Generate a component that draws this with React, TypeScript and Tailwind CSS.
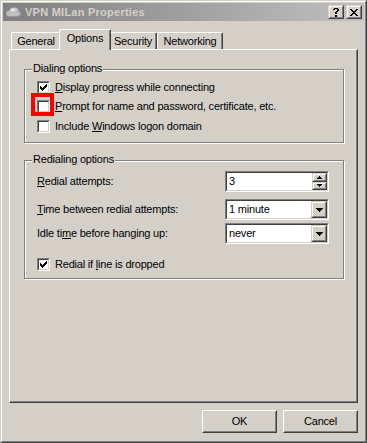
import React from "react";

function Pix({ rows, color = "#000" }: { rows: string[]; color?: string }) {
  const w = rows[0].length;
  const h = rows.length;
  let d = "";
  rows.forEach((r, y) => {
    for (let x = 0; x < r.length; x++) if (r[x] === "x") d += `M${x} ${y}h1v1h-1z`;
  });
  return (
    <svg width={w} height={h} viewBox={`0 0 ${w} ${h}`} shapeRendering="crispEdges" className="block">
      <path d={d} fill={color} />
    </svg>
  );
}

const CHECK = ["......x", ".....xx", "x...xxx", "xx.xxx.", "xxxxx..", ".xxx...", "..x...."];
const DOWN = ["xxxxxxx", ".xxxxx.", "..xxx..", "...x..."];
const SUP = ["..x..", ".xxx.", "xxxxx"];
const SDOWN = ["xxxxx", ".xxx.", "..x.."];
const CLOSE = ["xx....xx", ".xx..xx.", "..xxxx..", "...xx...", "..xxxx..", ".xx..xx.", "xx....xx"];
const HELP = [".xxxx.", "xx..xx", "....xx", "...xx.", "..xx..", "..xx..", "......", "..xx..", "..xx.."];

function Check({ checked }: { checked?: boolean }) {
  return (
    <div className="w-[13px] h-[13px] shrink-0 border border-t-[#808080] border-l-[#808080] border-b-white border-r-white">
      <div className="w-full h-full border border-t-[#404040] border-l-[#404040] border-b-[#d4d0c8] border-r-[#d4d0c8] bg-white flex items-center justify-center">
        {checked && <Pix rows={CHECK} />}
      </div>
    </div>
  );
}

function CapBtn({ children }: { children: React.ReactNode }) {
  return (
    <div className="w-[16px] h-[14px] border border-t-[#d4d0c8] border-l-[#d4d0c8] border-b-[#404040] border-r-[#404040]">
      <div className="w-full h-full bg-[#d4d0c8] border border-t-white border-l-white border-b-[#808080] border-r-[#808080] flex items-center justify-center">
        {children}
      </div>
    </div>
  );
}

function Sunken({ children }: { children: React.ReactNode }) {
  return (
    <div className="w-[104px] h-[21px] border border-t-[#808080] border-l-[#808080] border-b-white border-r-white">
      <div className="w-full h-full bg-white border border-t-[#404040] border-l-[#404040] border-b-[#d4d0c8] border-r-[#d4d0c8] flex">
        {children}
      </div>
    </div>
  );
}

function Combo({ value }: { value: string }) {
  return (
    <Sunken>
      <div className="flex-1 pl-[2px] flex items-center leading-[13px]">{value}</div>
      <div className="w-[16px] h-full border border-t-[#d4d0c8] border-l-[#d4d0c8] border-b-[#404040] border-r-[#404040]">
        <div className="w-full h-full bg-[#d4d0c8] border border-t-white border-l-white border-b-[#808080] border-r-[#808080] flex items-center justify-center">
          <Pix rows={DOWN} />
        </div>
      </div>
    </Sunken>
  );
}

function Spin({ value }: { value: string }) {
  return (
    <Sunken>
      <div className="flex-1 pl-[2px] flex items-center leading-[13px]">{value}</div>
      <div className="w-[15px] h-full flex flex-col">
        {[SUP, SDOWN].map((r, i) => (
          <div key={i} className="flex-1 border border-t-[#d4d0c8] border-l-[#d4d0c8] border-b-[#404040] border-r-[#404040]">
            <div className="w-full h-full bg-[#d4d0c8] border border-t-white border-l-white border-b-[#808080] border-r-[#808080] flex items-center justify-center">
              <Pix rows={r} />
            </div>
          </div>
        ))}
      </div>
    </Sunken>
  );
}

function PushBtn({ label }: { label: string }) {
  return (
    <div className="w-[75px] h-[23px] border border-t-white border-l-white border-b-[#404040] border-r-[#404040]">
      <div className="w-full h-full bg-[#d4d0c8] border border-t-[#d4d0c8] border-l-[#d4d0c8] border-b-[#808080] border-r-[#808080] flex items-center justify-center leading-[13px]">
        {label}
      </div>
    </div>
  );
}

function Tab({ label, w, selected }: { label: string; w: string; selected?: boolean }) {
  if (selected) {
    return (
      <div
        className={`${w} h-[21px] -mb-[1px] -mx-[2px] relative z-10 bg-[#d4d0c8] border-l border-t border-r border-l-white border-t-white border-r-[#404040] rounded-tl-[2px] rounded-tr-[2px] shadow-[inset_-1px_0_0_#808080] flex justify-center pt-[2px] leading-[13px]`}
      >
        {label}
      </div>
    );
  }
  return (
    <div
      className={`${w} h-[17px] bg-[#d4d0c8] border-l border-t border-r border-l-white border-t-white border-r-[#404040] rounded-tl-[2px] rounded-tr-[2px] shadow-[inset_-1px_0_0_#808080] flex justify-center pt-[2px] leading-[13px]`}
    >
      {label}
    </div>
  );
}

function CheckRow({ checked, children, mark }: { checked?: boolean; children: React.ReactNode; mark?: boolean }) {
  return (
    <div className="h-[13px] flex items-center gap-[5px] leading-[13px]">
      <div className="relative">
        <Check checked={checked} />
        {mark && <div className="absolute left-[-6px] top-[-7px] w-[23px] h-[23px] border-[4px] border-[#ff0000]" />}
      </div>
      <span className="whitespace-nowrap">{children}</span>
    </div>
  );
}

function Cloud() {
  return (
    <svg width="16" height="12" viewBox="0 0 16 12">
      <ellipse cx="5" cy="7.5" rx="4" ry="3" fill="#b8b8b8" />
      <ellipse cx="9" cy="5" rx="4.5" ry="3.5" fill="#c8c8c8" />
      <ellipse cx="12" cy="7.5" rx="3.5" ry="3" fill="#b0b0b0" />
      <ellipse cx="8.5" cy="8" rx="5" ry="2.5" fill="#c0c0c0" />
      <ellipse cx="8" cy="4" rx="2.5" ry="1.5" fill="#e4e4e4" />
    </svg>
  );
}

export default function App() {
  return (
    <div className="w-[367px] h-[443px] bg-[#d4d0c8] font-['Liberation_Sans',Arial,sans-serif] text-[11px] tracking-[-0.2px] text-black">
      <div className="w-full h-full border border-t-[#d4d0c8] border-l-[#d4d0c8] border-b-[#404040] border-r-[#404040]">
        <div className="w-full h-full border border-t-white border-l-white border-b-[#808080] border-r-[#808080] p-[1px] flex flex-col">
          {/* Title bar */}
          <div className="h-[18px] bg-linear-to-r from-[#808080] to-[#c0c0c0] flex items-center pl-[2px] pr-[2px]">
            <Cloud />
            <span className="ml-[4px] font-bold text-[#d4d0c8] tracking-[0.25px] leading-[13px]">VPN MILan Properties</span>
            <div className="ml-auto flex gap-[2px]">
              <CapBtn>
                <Pix rows={HELP} />
              </CapBtn>
              <CapBtn>
                <Pix rows={CLOSE} />
              </CapBtn>
            </div>
          </div>

          {/* Body */}
          <div className="flex-1 flex flex-col px-[6px] pt-[8px] pb-[7px]">
            <div className="h-[20px] flex items-end pl-[2px]">
              <Tab label="General" w="w-[50px]" />
              <Tab label="Options" w="w-[52px]" selected />
              <Tab label="Security" w="w-[48px]" />
              <Tab label="Networking" w="w-[66px]" />
            </div>
            <div className="h-[354px] border border-t-white border-l-white border-b-[#404040] border-r-[#404040] shadow-[inset_-1px_-1px_0_#808080] pl-[14px] pr-[13px] pt-[19px]">
              {/* Dialing options */}
              <div className="relative border border-[#808080] shadow-[inset_1px_1px_0_#fff,1px_1px_0_#fff] pl-[12px] pt-[11px] pb-[9px]">
                <span className="absolute left-[7px] top-[-8px] px-[1px] bg-[#d4d0c8] leading-[13px]">Dialing options</span>
                <CheckRow checked>
                  <u>D</u>isplay progress while connecting
                </CheckRow>
                <div className="mt-[6px]">
                  <CheckRow mark>
                    <u>P</u>rompt for name and password, certificate, etc.
                  </CheckRow>
                </div>
                <div className="mt-[7px]">
                  <CheckRow>
                    Include <u>W</u>indows logon domain
                  </CheckRow>
                </div>
              </div>

              {/* Redialing options */}
              <div className="relative mt-[17px] border border-[#808080] shadow-[inset_1px_1px_0_#fff,1px_1px_0_#fff] pl-[12px] pr-[14px] pt-[10px] pb-[7px]">
                <span className="absolute left-[7px] top-[-8px] px-[1px] bg-[#d4d0c8] leading-[13px]">Redialing options</span>
                <div className="flex items-center justify-between">
                  <span className="leading-[13px]">
                    <u>R</u>edial attempts:
                  </span>
                  <Spin value="3" />
                </div>
                <div className="flex items-center justify-between mt-[7px]">
                  <span className="leading-[13px]">
                    <u>T</u>ime between redial attempts:
                  </span>
                  <Combo value="1 minute" />
                </div>
                <div className="flex items-center justify-between mt-[3px]">
                  <span className="leading-[13px]">
                    Idle ti<u>m</u>e before hanging up:
                  </span>
                  <Combo value="never" />
                </div>
                <div className="mt-[14px]">
                  <CheckRow checked>
                    Redial if <u>l</u>ine is dropped
                  </CheckRow>
                </div>
              </div>
            </div>
            <div className="mt-[7px] flex justify-end gap-[6px]">
              <PushBtn label="OK" />
              <PushBtn label="Cancel" />
            </div>
          </div>
        </div>
      </div>
    </div>
  );
}
